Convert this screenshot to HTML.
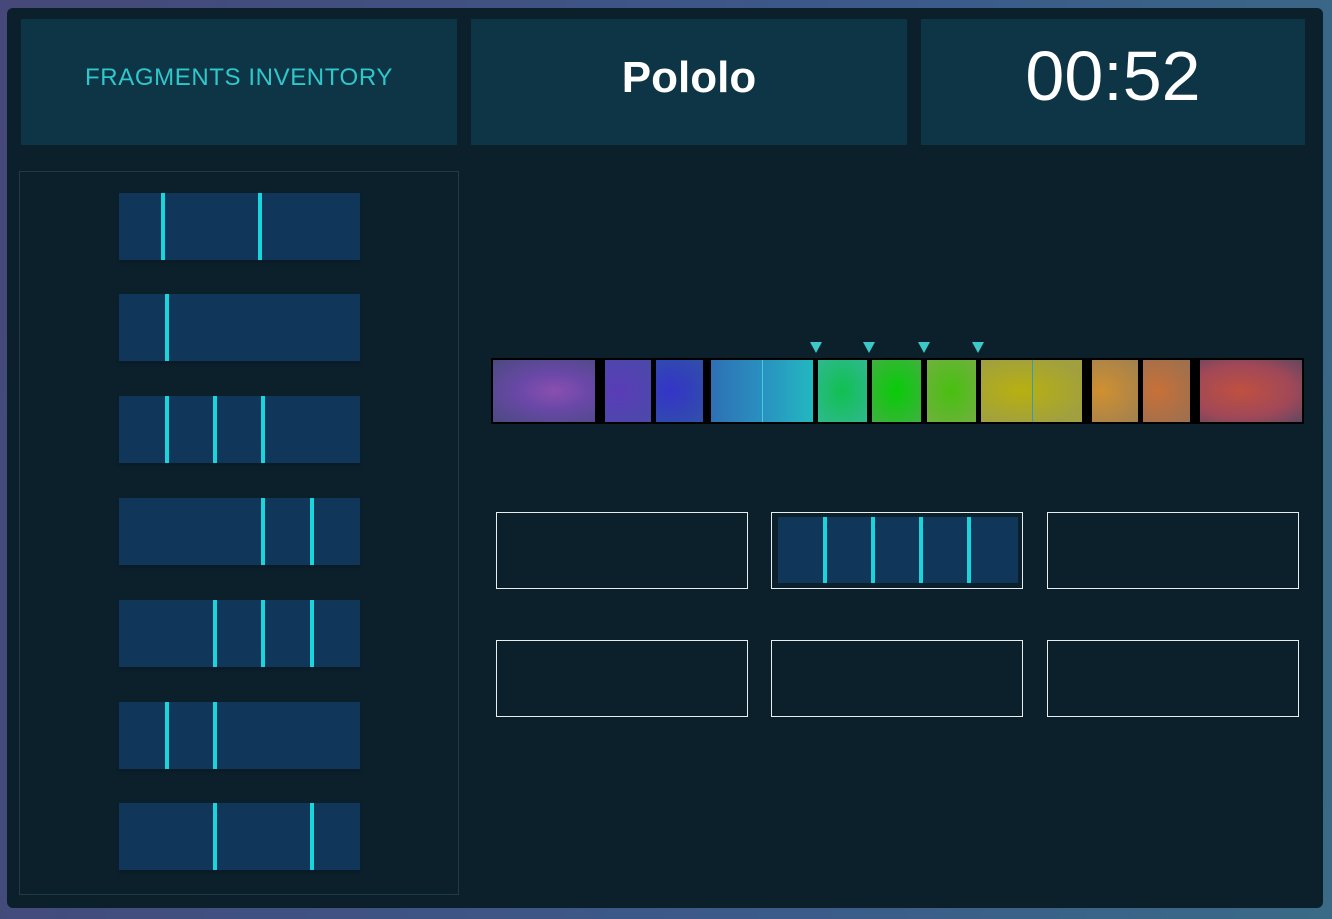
<!DOCTYPE html><html><head><style>
*{margin:0;padding:0;box-sizing:border-box}
body{width:1332px;height:919px;background:linear-gradient(100deg,#454878 0%,#3b5a8a 60%,#3a6a86 100%);position:relative;overflow:hidden;font-family:"Liberation Sans",sans-serif}
.p{position:absolute;left:7px;top:8px;width:1316px;height:900px;background:#0c202c;border-radius:6px}
.a{position:absolute}
.h{background:#0e3545;display:flex;align-items:center;justify-content:center}
.f{position:absolute;background:#10365a;box-shadow:0 3px 2px #0a1c28}
.l{position:absolute;top:0;width:4px;height:100%;background:#1ad6dc}
.s{position:absolute;top:2px;height:62px}
.slot{position:absolute;border:1px solid #e8eef0;width:252px;height:77px}
.t{position:absolute;top:342px;width:0;height:0;border-left:6px solid transparent;border-right:6px solid transparent;border-top:11px solid #3cc8c8}
</style></head><body>
<div class="p"></div>
<div class="a h" style="left:21px;top:19px;width:436px;height:126px;color:#2ec8cc;font-size:24px;letter-spacing:0.6px;padding-bottom:8px">FRAGMENTS INVENTORY</div>
<div class="a h" style="left:471px;top:19px;width:436px;height:126px;color:#fff;font-size:44px;font-weight:bold;padding-bottom:8px">Pololo</div>
<div class="a h" style="left:921px;top:19px;width:384px;height:126px;color:#fff;font-size:70px;padding-bottom:12px">00:52</div>
<div class="a" style="left:19px;top:171px;width:440px;height:724px;border:1px solid #1f3b48"></div>
<div class="f" style="left:119px;top:193px;width:241px;height:67px"><div class="l" style="left:42px"></div><div class="l" style="left:139px"></div></div>
<div class="f" style="left:119px;top:294px;width:241px;height:67px"><div class="l" style="left:46px"></div></div>
<div class="f" style="left:119px;top:396px;width:241px;height:67px"><div class="l" style="left:46px"></div><div class="l" style="left:94px"></div><div class="l" style="left:142px"></div></div>
<div class="f" style="left:119px;top:498px;width:241px;height:67px"><div class="l" style="left:142px"></div><div class="l" style="left:191px"></div></div>
<div class="f" style="left:119px;top:600px;width:241px;height:67px"><div class="l" style="left:94px"></div><div class="l" style="left:142px"></div><div class="l" style="left:191px"></div></div>
<div class="f" style="left:119px;top:702px;width:241px;height:67px"><div class="l" style="left:46px"></div><div class="l" style="left:94px"></div></div>
<div class="f" style="left:119px;top:803px;width:241px;height:67px"><div class="l" style="left:94px"></div><div class="l" style="left:191px"></div></div>
<div class="t" style="left:810px"></div><div class="t" style="left:863px"></div><div class="t" style="left:918px"></div><div class="t" style="left:972px"></div>
<div class="a" style="left:491px;top:358px;width:813px;height:66px;background:#000">
<div class="s" style="left:2px;width:102px;background:radial-gradient(ellipse at 60% 50%,#8a4fb0 0%,#6a48a8 40%,#4a4a80 100%)"></div>
<div class="s" style="left:114px;width:46px;background:radial-gradient(ellipse at 30% 50%,#5a3cb8,#4a4aa8)"></div>
<div class="s" style="left:165px;width:47px;background:radial-gradient(ellipse at 30% 50%,#3434c8,#3050a8)"></div>
<div class="s" style="left:220px;width:102px;background:linear-gradient(90deg,#2e70b4,#2a90c0 50%,#22b8c0)"></div>
<div class="a" style="left:271px;top:2px;width:1px;height:62px;background:#3cd0d8"></div>
<div class="s" style="left:327px;width:49px;background:radial-gradient(ellipse,#10c050,#30b890)"></div>
<div class="s" style="left:381px;width:49px;background:radial-gradient(ellipse,#08cc08,#40b040)"></div>
<div class="s" style="left:436px;width:49px;background:radial-gradient(ellipse,#48c010,#70b040)"></div>
<div class="s" style="left:490px;width:101px;background:radial-gradient(ellipse at 40% 50%,#b8b010,#a0a040 80%)"></div>
<div class="a" style="left:541px;top:2px;width:1px;height:62px;background:#30a0b0"></div>
<div class="s" style="left:601px;width:46px;background:radial-gradient(ellipse at 20% 50%,#d09030,#a08050)"></div>
<div class="s" style="left:652px;width:47px;background:radial-gradient(ellipse at 30% 50%,#c87038,#9a7050)"></div>
<div class="s" style="left:709px;width:102px;background:radial-gradient(ellipse at 40% 50%,#c05040,#a04858 60%,#604860)"></div>
</div>
<div class="slot" style="left:496px;top:512px"></div>
<div class="slot" style="left:771px;top:512px"></div>
<div class="f" style="left:778px;top:517px;width:240px;height:66px;box-shadow:none"><div class="l" style="left:45px"></div><div class="l" style="left:93px"></div><div class="l" style="left:141px"></div><div class="l" style="left:189px"></div></div>
<div class="slot" style="left:1047px;top:512px"></div>
<div class="slot" style="left:496px;top:640px"></div>
<div class="slot" style="left:771px;top:640px"></div>
<div class="slot" style="left:1047px;top:640px"></div>
</body></html>
